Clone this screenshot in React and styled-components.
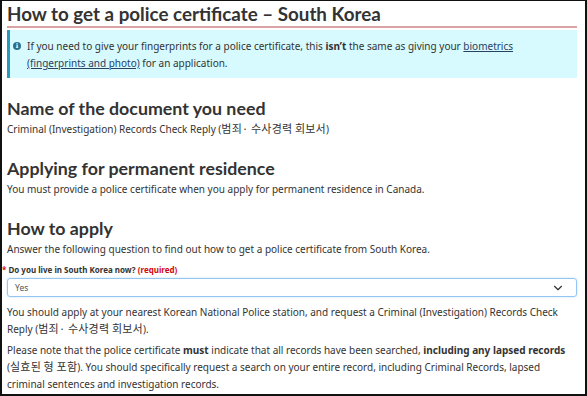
import React from 'react';
import styled, { createGlobalStyle } from 'styled-components';
import { ChevronDown } from 'lucide-react';

const GlobalStyle = createGlobalStyle`
  html, body {
    margin: 0;
    padding: 0;
    background: #fff;
  }
  body {
    font-family: "Noto Sans", "Noto Sans CJK KR", sans-serif;
    color: #333;
  }
`;

const Frame = styled.div`
  box-sizing: border-box;
  width: 587px;
  height: 396px;
  overflow: hidden;
  border: 2px solid #111;
  border-top-width: 1px;
  padding: 0 8px 0 5px;
`;

const Title = styled.h1`
  font-family: Lato, "Liberation Sans", sans-serif;
  font-weight: 700;
  font-size: 18.8px;
  line-height: 24px;
  margin: 0;
  padding-top: 1px;
  border-bottom: 2px solid #dba3a6;
  color: #333;
`;

const Alert = styled.div`
  margin-top: 2px;
  background: #d7faff;
  border-left: 3px solid #269abc;
  padding: 8px 12px 6px 3px;
  display: flex;
  gap: 6px;
  font-size: 10px;
  line-height: 17px;
`;

const InfoIcon = styled.span`
  flex: none;
  width: 8px;
  height: 8px;
  margin-top: 4px;
  border-radius: 50%;
  background: #2b6f8f;
  color: #fff;
  font-family: "DejaVu Serif", serif;
  font-weight: 700;
  font-size: 6.5px;
  line-height: 8px;
  text-align: center;
`;

const Link = styled.a`
  color: #284162;
  text-decoration: underline;
`;

const Heading = styled.h2`
  font-family: Lato, "Liberation Sans", sans-serif;
  font-weight: 700;
  font-size: 17.8px;
  line-height: 24px;
  margin: 18px 0 1px;
  color: #333;
`;

const Text = styled.p`
  margin: 0 0 ${p => p.$bottom || 0}px;
  font-size: 10px;
  line-height: 17px;
`;

const Korean = styled.span`
  font-family: "Noto Sans CJK KR", "Noto Sans", sans-serif;
  font-size: 11px;
  letter-spacing: 0.2px;
  line-height: 1;
`;

const Label = styled.label`
  display: block;
  margin: 6px 0 2px -5px;
  font-size: 8px;
  font-weight: 700;
  line-height: 12px;
  color: #333;
`;

const Required = styled.span`
  color: #d3080c;
`;

const Select = styled.div`
  box-sizing: border-box;
  height: 19px;
  border: 1px solid #95c6f1;
  box-shadow: 0 0 2px #b4d8f6;
  border-radius: 3px;
  padding: 0 11px 0 7px;
  display: flex;
  align-items: center;
  justify-content: space-between;
  font-size: 8.5px;
  color: #555;
`;

const Answer = styled.div`
  margin-top: 7px;
  padding-right: 4px;
`;

export default function App() {
  return (
    <>
      <GlobalStyle />
      <Frame>
        <Title>How to get a police certificate – South Korea</Title>
        <Alert>
          <InfoIcon>i</InfoIcon>
          <div>
            If you need to give your fingerprints for a police certificate, this <b>isn’t</b> the same as giving your{' '}
            <Link href="#">biometrics (fingerprints and photo)</Link> for an application.
          </div>
        </Alert>

        <Heading>Name of the document you need</Heading>
        <Text>Criminal (Investigation) Records Check Reply (<Korean>범죄· 수사경력 회보서</Korean>)</Text>

        <Heading>Applying for permanent residence</Heading>
        <Text>You must provide a police certificate when you apply for permanent residence in Canada.</Text>

        <Heading>How to apply</Heading>
        <Text>Answer the following question to find out how to get a police certificate from South Korea.</Text>

        <Label>
          <Required>* </Required>Do you live in South Korea now? <Required>(required)</Required>
        </Label>
        <Select>
          <span>Yes</span>
          <ChevronDown size={14} strokeWidth={2} color="#333" />
        </Select>

        <Answer>
          <Text $bottom={4}>
            You should apply at your nearest Korean National Police station, and request a Criminal (Investigation) Records Check Reply (<Korean>범죄· 수사경력 회보서</Korean>).
          </Text>
          <Text>
            Please note that the police certificate <b>must</b> indicate that all records have been searched, <b>including any lapsed records</b> (<Korean>실효된 형 포함</Korean>). You should specifically request a search on your entire record, including Criminal Records, lapsed criminal sentences and investigation records.
          </Text>
        </Answer>
      </Frame>
    </>
  );
}
